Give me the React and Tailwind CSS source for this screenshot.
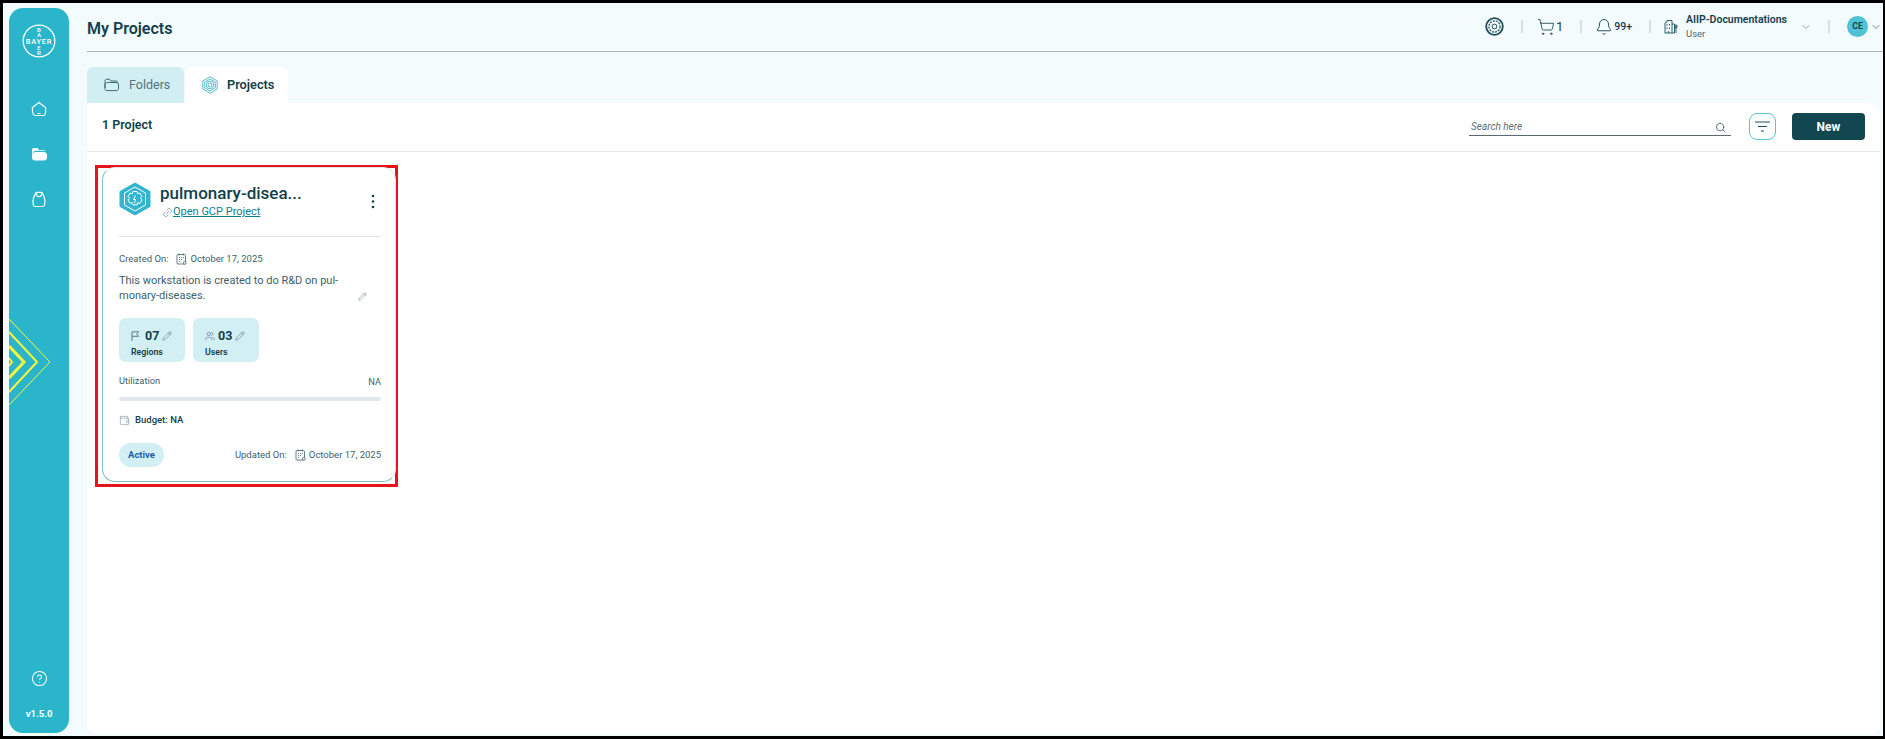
import { Bell, ChevronDown, CircleHelp, Link2, Pencil, Search, ShoppingCart, Users, Wallet } from 'lucide-react';

function HomeIcon() {
  return (
    <svg width="16" height="16" viewBox="0 0 16 16" fill="none" stroke="white" strokeWidth="1.2">
      <path d="M8 1.5 14.6 6.5c.3 3 .1 5.5-.8 7.2-.3.5-.8.8-1.4.8H4.2c-.6 0-1.1-.3-1.4-.8C1.500 12 1.300 9.500 1.400 6.500Z" />
      <path d="M6.500 12.500h3" />
    </svg>
  );
}

function FolderIcon() {
  return (
    <svg width="17" height="16" viewBox="0 0 17 16" fill="white">
      <path d="M1 4c0-1.200.8-2 2-2h3.500l1.500 2h5c.8 0 1.400.3 1.700.8H5c-1.500 0-2.400.7-2.900 1.700L1 8.500Z" />
      <path d="M1 10c0-2.500 1.500-4 4-4h7.500c2.200 0 3.500 1.300 3.500 3.300v2.200c0 1.800-1.200 3-3 3H4c-1.800 0-3-1.200-3-3Z" />
    </svg>
  );
}

function BagIcon() {
  return (
    <svg width="16" height="17" viewBox="0 0 16 17" fill="none" stroke="white" strokeWidth="1.2">
      <path d="M4.500 2.500c0-.7.500-1.200 1.200-1.200h4.600c.7 0 1.200.5 1.200 1.200l2 4.500c.7 2.300.6 4.800.1 6.800-.3 1-1 1.700-2.100 1.700H4.400c-1.100 0-1.800-.7-2.100-1.700C1.800 11.800 1.700 9.300 2.500 7Z" />
      <path d="M5.500 2.500c-.2 2 .8 3.200 2.500 3.200s2.700-1.200 2.500-3.200" />
    </svg>
  );
}

function CalendarIcon() {
  return (
    <svg width="11" height="12" viewBox="0 0 11 12" fill="none" stroke="#54717a" strokeWidth="0.9" className="shrink-0">
      <rect x="1" y="1.500" width="8.500" height="9.500" rx="1" />
      <path d="M3 .5v2M7.500.5v2M3 4.500h1M5 4.500h1M7 4.500h1M3 6.500h1M5 6.500h1M3 8.500h1" />
      <circle cx="8.800" cy="9.800" r="1.400" fill="white" />
    </svg>
  );
}

function HexIcon() {
  return (
    <svg width="34" height="34" viewBox="0 0 34 34" fill="none" className="-ml-[1px] shrink-0">
      <path d="M17 1 32 9.500v15L17 33 2 24.500v-15Z" fill="#33b5cf" stroke="#33b5cf" strokeWidth="1" strokeLinejoin="round" />
      <path d="M17 5 27.500 11v12L17 29 6.500 23V11Z" stroke="white" strokeWidth="1" />
      <path d="m15 9.500h4l.7 2.200 2.300-.6 2 3.400-1.600 1.700 1.600 1.700-2 3.400-2.300-.6-.7 2.200h-4l-.7-2.200-2.300.6-2-3.400 1.600-1.700-1.600-1.700 2-3.400 2.300.6Z" stroke="white" strokeWidth="1" />
      <path d="m17.500 13.500-2 4h2l-1 3.500" stroke="white" strokeWidth="1" />
    </svg>
  );
}

function ProjectsTabIcon() {
  return (
    <svg width="18" height="18" viewBox="0 0 18 18" fill="none" stroke="#2fa9bf" strokeWidth="0.8">
      <path d="M9 .8 16.200 5v8L9 17.200 1.800 13V5Z" />
      <path d="M9 3 14.300 6.100v5.800L9 15 3.700 11.900V6.100Z" />
      <circle cx="9" cy="9" r="3.800" />
      <circle cx="9" cy="9" r="2" />
    </svg>
  );
}

function TargetIcon() {
  return (
    <svg width="19" height="19" viewBox="0 0 19 19" fill="none" stroke="#1d4d59">
      <circle cx="9.500" cy="9.500" r="8.300" strokeWidth="1.800" />
      <circle cx="9.500" cy="9.500" r="5.600" strokeWidth="1.200" strokeDasharray="2 1" />
      <circle cx="9.500" cy="9.500" r="2.400" strokeWidth="1" />
    </svg>
  );
}

function BuildingIcon() {
  return (
    <svg width="15" height="15" viewBox="0 0 15 15" fill="none" stroke="#1d4d59" strokeWidth="0.9">
      <path d="M1 14V4l2-1V1.500h5V14ZM8 5h2.500V14H8M12 6v8M11 6.500c.7-1 1.500-1 2 0v2c-.5.6-1.400.6-2 0Z" />
      <path d="M3 5v1.500M5.500 5v1.500M3 8.500V10M5.500 8.500V10M4.300 12v2" />
    </svg>
  );
}

function FilterIcon() {
  return (
    <svg width="15" height="11" viewBox="0 0 15 11" stroke="#1d4d59" strokeWidth="1.100">
      <path d="M0 1h15M3 5.500h9M6 10h3" />
    </svg>
  );
}

function FlagIcon() {
  return (
    <svg width="9" height="10" viewBox="0 0 9 10" fill="none" stroke="#54717a" strokeWidth="0.9">
      <path d="M1 10V.8h6.800L5.500 3l2.300 2.300H1" />
    </svg>
  );
}

function Sep() {
  return <span className="block h-[13px] w-[2px] shrink-0 bg-[#d9dfe1]" />;
}

export default function App() {
  return (
    <div className="h-[739px] w-[1885px] overflow-hidden border-y-[3px] border-r-2 border-l-[3px] border-black bg-[#f3fbfd] font-['Roboto',sans-serif] text-[#123f4c]">
      <div className="flex h-full">
        <aside className="relative my-[5px] ml-[6px] flex h-[725px] w-[60px] shrink-0 flex-col items-center overflow-hidden rounded-[14px] bg-[#2bb5ca]">
          <svg width="34" height="34" viewBox="0 0 34 34" fill="none" className="mt-[16px]">
            <circle cx="17" cy="17" r="15.800" stroke="white" strokeWidth="1.300" />
            <text x="17" y="19.600" textAnchor="middle" fontSize="7.500" fontWeight="500" fill="white" letterSpacing="0.700">BAYER</text>
            <text x="17" y="7.800" textAnchor="middle" fontSize="6" fontWeight="500" fill="white">B</text>
            <text x="17" y="13.300" textAnchor="middle" fontSize="6" fontWeight="500" fill="white">A</text>
            <text x="17" y="25.500" textAnchor="middle" fontSize="6" fontWeight="500" fill="white">E</text>
            <text x="17" y="31" textAnchor="middle" fontSize="6" fontWeight="500" fill="white">R</text>
          </svg>
          <div className="mt-[43px] flex flex-col items-center gap-[29px]">
            <HomeIcon />
            <FolderIcon />
            <BagIcon />
          </div>
          <svg width="41" height="90" viewBox="0 0 41 90" fill="none" stroke="#f5f53a" className="absolute top-[309px] left-0">
            <path d="M0 2 41 45 0 88" strokeWidth="1" />
            <path d="M0 15 28 45 0 75" strokeWidth="2" />
            <path d="M0 29 15 45 0 61" strokeWidth="3" />
            <path d="M0 41 3 45 0 49" strokeWidth="2" />
          </svg>
          <CircleHelp size={17} color="white" strokeWidth={1.500} className="mt-auto" />
          <span className="mt-[20px] mb-[12px] text-[9.500px] font-bold text-white">v1.5.0</span>
        </aside>

        <main className="ml-[18px] flex min-w-0 flex-1 flex-col">
          <header className="flex h-[49px] shrink-0 items-center border-b border-[#a9b2b5]">
            <h1 className="mt-[3px] text-[16px] font-semibold">My Projects</h1>
            <div className="-mt-[1px] ml-auto flex items-center">
              <TargetIcon />
              <span className="ml-[17px]"><Sep /></span>
              <ShoppingCart size={18} strokeWidth={1.100} className="ml-[14px]" />
              <span className="ml-[1px] text-[13px]">1</span>
              <span className="ml-[17px]"><Sep /></span>
              <Bell size={18} strokeWidth={1.200} className="ml-[13px]" />
              <span className="ml-[1px] text-[10.500px] font-medium">99+</span>
              <span className="ml-[17px]"><Sep /></span>
              <span className="ml-[13px]"><BuildingIcon /></span>
              <div className="ml-[7px] flex flex-col leading-none">
                <span className="text-[10.500px] font-semibold">AIIP-Documentations</span>
                <span className="mt-[3px] text-[9.500px] text-[#4b6a74]">User</span>
              </div>
              <ChevronDown size={12} strokeWidth={1.200} className="ml-[13px] text-[#54717a]" />
              <span className="ml-[16px]"><Sep /></span>
              <span className="ml-[17px] flex h-[21px] w-[21px] items-center justify-center rounded-full bg-[#4fc3d4] text-[8.500px] font-bold">CE</span>
              <ChevronDown size={12} strokeWidth={1.200} className="mr-[1px] ml-[2px]" />
            </div>
          </header>

          <div className="mt-[15px] flex h-[36px] shrink-0 items-end gap-[2px]">
            <div className="flex h-[36px] w-[97px] items-center rounded-t-[6px] bg-[#d1eff3] pl-[17px] text-[#54717a]">
              <svg width="15" height="14" viewBox="0 0 15 14" fill="none" stroke="#3f6a75" strokeWidth="1">
                <path d="M1 10V3.200C1 2 1.800 1.200 3 1.200h2.500L7 3h5c1 0 1.800.8 1.800 1.800M1 7c0-1.500 1-2.500 2.500-2.500H12c1.500 0 2.500 1 2.500 2.500v3.800c0 1-.8 1.800-1.800 1.800H3c-1.200 0-2-.8-2-2Z" />
              </svg>
              <span className="ml-[10px] text-[12.500px]">Folders</span>
            </div>
            <div className="flex h-[36px] w-[102px] items-center rounded-t-[6px] bg-white pl-[15px]">
              <ProjectsTabIcon />
              <span className="ml-[8px] text-[12.750px] font-semibold">Projects</span>
            </div>
          </div>

          <section className="mr-[3px] mb-[2px] flex min-h-0 flex-1 flex-col rounded-tr-[12px] rounded-b-[10px] bg-white">
            <div className="flex h-[49px] shrink-0 items-center border-b border-[#e5e7eb] pr-[15px] pl-[15px]">
              <span className="-mt-[4px] text-[12.500px] font-semibold">1 Project</span>
              <div className="ml-auto flex w-[262px] items-center justify-between self-start border-b border-[#5a6a70] pt-[16px] pr-[5px] pl-[2px]">
                <span className="text-[10px] leading-[16px] text-[#5c7079] italic">Search here</span>
                <Search size={11} strokeWidth={1.500} />
              </div>
              <button className="-mt-[1px] ml-[18px] flex h-[27px] w-[27px] items-center justify-center rounded-[8px] border border-[#59c3d3]">
                <FilterIcon />
              </button>
              <button className="-mt-[1px] ml-[16px] h-[27px] w-[73px] rounded-[4px] bg-[#124650] text-[12px] font-bold text-white">New</button>
            </div>

            <div className="mt-[13px] ml-[8px] h-[322px] w-[303px] border-[3px] border-[#e8141c] pb-[3px] pl-[4px]">
              <article className="-mt-[1px] flex h-[315px] w-[294px] flex-col rounded-[13px] border border-[#dfe7e9] border-b-[#7fbcc4] border-l-[#7fbcc4] pr-[14px] pl-[16px]">
                <div className="flex shrink-0 pt-[14px]">
                  <HexIcon />
                  <div className="ml-[8px] min-w-0">
                    <div className="text-[17px] leading-[22px] font-medium">pulmonary-disea...</div>
                    <div className="ml-[2px] flex items-center text-[#0f7d90]">
                      <Link2 size={11} strokeWidth={1.200} className="-rotate-45 text-[#54717a]" />
                      <span className="text-[11px] leading-[16px] underline">Open GCP Project</span>
                    </div>
                  </div>
                  <svg width="4" height="15" viewBox="0 0 4 15" fill="#123f4c" className="mt-[12px] mr-[6px] ml-auto">
                    <circle cx="2" cy="2" r="1.300" />
                    <circle cx="2" cy="7.500" r="1.300" />
                    <circle cx="2" cy="13" r="1.300" />
                  </svg>
                </div>
                <div className="mt-[16px] border-t border-[#dfe3e5]" />
                <div className="mt-[15px] flex items-center text-[9.500px] leading-[14px] text-[#3d5f6a]">
                  <span>Created On:</span>
                  <span className="ml-[8px]"><CalendarIcon /></span>
                  <span className="ml-[3px]">October 17, 2025</span>
                </div>
                <div className="relative mt-[7px] text-[11px] leading-[15px] text-[#3d5f6a]">
                  <p>This workstation is created to do R&amp;D on pul-<br />monary-diseases.</p>
                  <Pencil size={9} strokeWidth={1.100} className="absolute right-[14px] bottom-[2px]" />
                </div>
                <div className="mt-[15px] flex gap-[8px]">
                  <div className="h-[44px] w-[66px] rounded-[7px] bg-[#d2f0f4] pt-[11px] pl-[12px]">
                    <div className="flex items-center">
                      <FlagIcon />
                      <span className="ml-[5px] text-[12.500px] leading-[14px] font-bold">07</span>
                      <Pencil size={10} strokeWidth={1.200} className="ml-[3px] text-[#3c5f6a]" />
                    </div>
                    <div className="mt-[3px] text-[8.750px] leading-[12px] font-semibold">Regions</div>
                  </div>
                  <div className="h-[44px] w-[66px] rounded-[7px] bg-[#d2f0f4] pt-[11px] pl-[12px]">
                    <div className="flex items-center">
                      <Users size={10} strokeWidth={1.200} className="text-[#3c5f6a]" />
                      <span className="ml-[3px] text-[12.500px] leading-[14px] font-bold">03</span>
                      <Pencil size={10} strokeWidth={1.200} className="ml-[3px] text-[#3c5f6a]" />
                    </div>
                    <div className="mt-[3px] text-[8.750px] leading-[12px] font-semibold">Users</div>
                  </div>
                </div>
                <div className="mt-[12px] flex items-end justify-between text-[9.250px] leading-[13px] text-[#3d5f6a]">
                  <span>Utilization</span>
                  <span className="-mb-[1px]">NA</span>
                </div>
                <div className="mt-[10px] h-[4px] rounded-full bg-[#e2e8ee]" />
                <div className="mt-[12px] flex items-center text-[9.500px] leading-[14px] font-medium">
                  <Wallet size={11} strokeWidth={1} className="text-[#54717a]" />
                  <span className="ml-[5px]">Budget: NA</span>
                </div>
                <div className="mt-[16px] flex items-center">
                  <span className="flex h-[24px] w-[45px] items-center justify-center rounded-full bg-[#d2f0f4] text-[9.500px] font-bold text-[#1a5fa8]">Active</span>
                  <div className="ml-auto flex items-center text-[9.500px] leading-[14px] text-[#3d5f6a]">
                    <span>Updated On:</span>
                    <span className="ml-[8px]"><CalendarIcon /></span>
                    <span className="ml-[3px]">October 17, 2025</span>
                  </div>
                </div>
              </article>
            </div>
          </section>
        </main>
      </div>
    </div>
  );
}
